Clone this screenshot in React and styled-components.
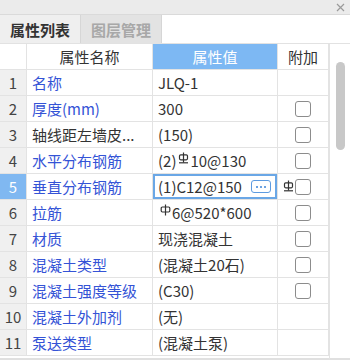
import React from "react";
import styled, { createGlobalStyle } from "styled-components";

const Global = createGlobalStyle`
  html, body { margin: 0; padding: 0; background: #fff; }
  body { font-family: "Noto Sans CJK SC", "Noto Sans", sans-serif; }
`;

const Panel = styled.div`
  width: 350px;
  height: 360px;
  overflow: hidden;
  display: flex;
  flex-direction: column;
  background: #fff;
  font-size: 15px;
`;

const TopBar = styled.div`
  height: 14px;
  flex: none;
  background: #ebebeb;
  border-bottom: 1px solid #dadada;
  display: flex;
  justify-content: flex-end;
  align-items: center;
  padding-right: 5px;
`;

const TabBar = styled.div`
  height: 28px;
  flex: none;
  display: flex;
  background: #fff;
  border-bottom: 1px solid #e2e2e2;
`;

const Tab = styled.div`
  width: 81px;
  height: 28px;
  box-sizing: border-box;
  display: flex;
  align-items: center;
  justify-content: center;
  font-weight: 700;
  font-size: 15px;
  color: ${(p) => (p.$active ? "#333" : "#a8a8a8")};
  background: ${(p) => (p.$active ? "#efefef" : "#e3e3e3")};
  border-right: 1px solid #d6d6d6;
`;

const Body = styled.div`
  flex: 1;
  display: flex;
  min-height: 0;
`;

const Grid = styled.div`
  width: 329px;
  display: grid;
  grid-template-columns: 27px 126px 125px 51px;
  grid-auto-rows: 26px;
  align-content: start;
  border-bottom: 2px solid #e0e0e0;
  box-sizing: border-box;
`;

const Cell = styled.div`
  position: relative;
  box-sizing: border-box;
  border-right: 1px solid #e3e3e3;
  border-bottom: 1px solid #e3e3e3;
  display: flex;
  align-items: center;
  padding: 0 5px;
  white-space: nowrap;
  overflow: visible;
  color: #333;
`;

const HeadCell = styled(Cell)`
  justify-content: center;
  background: ${(p) => (p.$sel ? "#7db8f3" : "#fff")};
  color: ${(p) => (p.$sel ? "#fff" : "#333")};
`;

const NumCell = styled(Cell)`
  justify-content: center;
  padding: 0;
  background: ${(p) => (p.$sel ? "#80b8f1" : "#f0f0f0")};
  color: ${(p) => (p.$sel ? "#fff" : "#444")};
`;

const NameCell = styled(Cell)`
  color: ${(p) => (p.$plain ? "#333" : "#3453d6")};
`;

const ValueCell = styled(Cell)`
  ${(p) =>
    p.$edit
      ? `box-shadow: inset 0 0 0 2px #6aa7e6; justify-content: space-between; padding-right: 6px;`
      : ""}
`;

const AttachCell = styled(Cell)`
  justify-content: center;
  padding: 0;
`;

const Check = styled.div`
  width: 16px;
  height: 16px;
  box-sizing: border-box;
  border: 1px solid #8c8c8c;
  border-radius: 3px;
  background: #fff;
`;

const MoreBtn = styled.div`
  width: 20px;
  height: 13px;
  box-sizing: border-box;
  border: 1px solid #5d9be0;
  border-radius: 3px;
  display: flex;
  align-items: center;
  justify-content: center;
  gap: 2px;
  background: #fff;
`;

const Dot = styled.span`
  width: 2px;
  height: 2px;
  border-radius: 1px;
  background: #3d85d8;
`;

const Overflow = styled.span`
  position: absolute;
  left: 5px;
  top: 6px;
  display: flex;
`;

const Sym = styled.span`
  display: inline-flex;
  margin: 0 1px 0 2px;
  transform: translateY(-3px);
`;

const ScrollTrack = styled.div`
  width: 21px;
  flex: none;
  box-sizing: border-box;
  border-left: 1px solid #e3e3e3;
  border-bottom: 2px solid #e0e0e0;
  display: flex;
  justify-content: center;
  padding-top: 18px;
`;

const Thumb = styled.div`
  width: 9px;
  height: 88px;
  border-radius: 5px;
  background: #c8c8c8;
`;

const Rebar3 = () => (
  <svg width="11" height="12" viewBox="0 0 11 12" fill="none" stroke="#333" strokeWidth="1.2">
    <path d="M5.5 0.5V10.5" />
    <rect x="1.5" y="2.8" width="8" height="5" rx="1.2" />
    <path d="M1 10.8H10" />
  </svg>
);

const Rebar1 = () => (
  <svg width="11" height="12" viewBox="0 0 11 12" fill="none" stroke="#333" strokeWidth="1.2">
    <path d="M5.5 0.5V11.5" />
    <rect x="1.2" y="3" width="8.6" height="5" rx="1.2" />
  </svg>
);

const rows = [
  { n: 1, name: "名称", value: "JLQ-1", check: false },
  { n: 2, name: "厚度(mm)", value: "300", check: true },
  { n: 3, name: "轴线距左墙皮...", value: "(150)", check: true, plain: true },
  { n: 4, name: "水平分布钢筋", value: <>(2)<Sym><Rebar3 /></Sym>10@130</>, check: true },
  { n: 5, name: "垂直分布钢筋", value: "(1)C12@150", check: true, edit: true },
  { n: 6, name: "拉筋", value: <><Sym><Rebar1 /></Sym>6@520*600</>, check: true },
  { n: 7, name: "材质", value: "现浇混凝土", check: true },
  { n: 8, name: "混凝土类型", value: "(混凝土20石)", check: true },
  { n: 9, name: "混凝土强度等级", value: "(C30)", check: true },
  { n: 10, name: "混凝土外加剂", value: "(无)", check: false },
  { n: 11, name: "泵送类型", value: "(混凝土泵)", check: false },
];

export default function App() {
  return (
    <>
      <Global />
      <Panel>
        <TopBar>
          <svg width="9" height="9" viewBox="0 0 9 9" stroke="#9a9a9a" strokeWidth="1.2">
            <path d="M1 1L8 8M8 1L1 8" />
          </svg>
        </TopBar>
        <TabBar>
          <Tab $active>属性列表</Tab>
          <Tab>图层管理</Tab>
        </TabBar>
        <Body>
          <Grid>
            <HeadCell />
            <HeadCell>属性名称</HeadCell>
            <HeadCell $sel>属性值</HeadCell>
            <HeadCell>附加</HeadCell>
            {rows.map((r) => (
              <React.Fragment key={r.n}>
                <NumCell $sel={r.edit}>{r.n}</NumCell>
                <NameCell $plain={r.plain}>{r.name}</NameCell>
                <ValueCell $edit={r.edit}>
                  <span>{r.value}</span>
                  {r.edit && (
                    <MoreBtn>
                      <Dot />
                      <Dot />
                      <Dot />
                    </MoreBtn>
                  )}
                </ValueCell>
                <AttachCell>
                  {r.edit && (
                    <Overflow>
                      <Rebar3 />
                    </Overflow>
                  )}
                  {r.check && <Check />}
                </AttachCell>
              </React.Fragment>
            ))}
          </Grid>
          <ScrollTrack>
            <Thumb />
          </ScrollTrack>
        </Body>
      </Panel>
    </>
  );
}
